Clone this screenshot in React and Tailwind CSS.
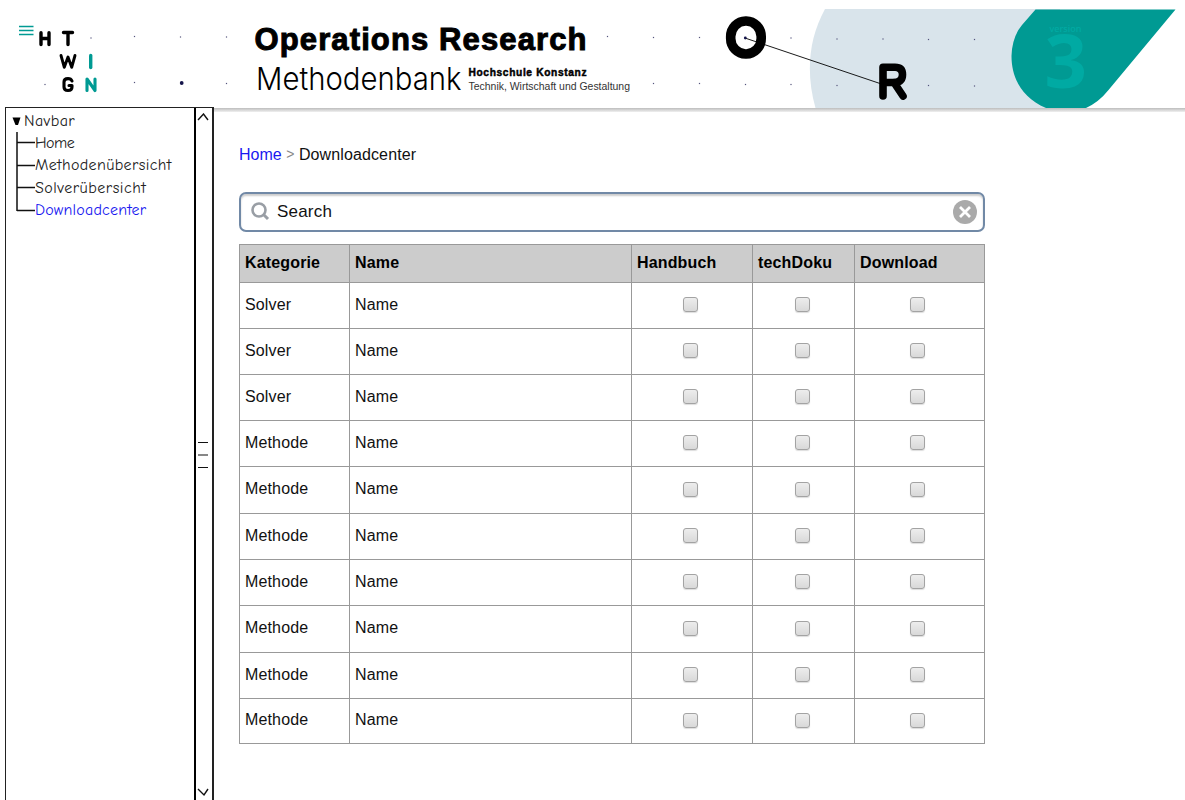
import React from "react";

const rows = [
  ["Solver", "h-[46px]"],
  ["Solver", "h-[46px]"],
  ["Solver", "h-[46px]"],
  ["Methode", "h-[46px]"],
  ["Methode", "h-[47px]"],
  ["Methode", "h-[46px]"],
  ["Methode", "h-[46px]"],
  ["Methode", "h-[47px]"],
  ["Methode", "h-[46px]"],
  ["Methode", "h-[45px]"],
];

const dots = [
  [91, 38], [134.5, 36.5], [180.5, 37], [226.5, 37], [607.5, 36.5], [653.5, 37.5], [699.5, 37.5],
  [791, 38], [837, 39], [883, 39], [928.5, 39.5], [974.5, 39.5],
  [45, 84.5], [134.5, 82.5], [226.5, 83.5], [653.5, 83.5], [699.5, 83.5], [745.5, 84.5],
  [791, 84.5], [837, 85.5], [928.5, 85.5], [974.5, 86],
];

function Banner() {
  return (
    <svg className="block h-[108px] w-[1185px] shrink-0 overflow-visible" viewBox="0 0 1185 108">
      <path d="M825 9H1060V108H815.5C806 74 808 40 825 9Z" fill="#d9e4eb" />
      <path
        d="M1035.500 9.500H1175.500L1108.500 90Q1099 102 1086 108H1046C1022 98 1011.500 78 1011.500 56Q1012 37 1022 25Z"
        fill="#009a93"
      />
      {dots.map(([x, y]) => (
        <rect key={`${x}-${y}`} x={x - 0.6} y={y - 0.6} width="1.200" height="1.200" fill="#55557c" />
      ))}
      <circle cx="181.700" cy="83" r="1.900" fill="#15154b" />
      <g stroke="#009a93" strokeWidth="1.300">
        <path d="M19 26.500H33.500M19 30.500H33.500M19 34.500H33.500" />
      </g>
      <g fill="none" strokeWidth="3.400" strokeLinecap="round" strokeLinejoin="round" stroke="#000">
        <g aria-label="HTWG" role="img">
          <path d="M41 32.700V44.500M49 32.700V44.500M41 38.500H49" />
          <path d="M63.500 32.500H72.500M68 32.500V44.500" />
          <path d="M61 55.500L64.300 67.300L68 57L71.700 67.300L75 55.500" strokeWidth="2.900" />
          <path d="M72 81Q71 78.600 68 78.600Q64 78.600 64 82V87Q64 90.500 68 90.500Q72 90.500 72 87V85.500H69" strokeWidth="3.100" />
        </g>
        <g stroke="#009a93">
          <path d="M90.700 55.500V67.500" />
          <path d="M87 90.500V79L95 90.500V79" strokeWidth="3.100" />
        </g>
      </g>
      <g fontFamily="'Liberation Sans', Arial, sans-serif">
        <text x="254.500" y="50" fontSize="31" fontWeight="700" stroke="#000" strokeWidth="1" textLength="332" lengthAdjust="spacing">Operations Research</text>
        <text x="468.500" y="76" fontSize="10.200" fontWeight="700" stroke="#000" strokeWidth="0.450" textLength="118" lengthAdjust="spacing">Hochschule Konstanz</text>
        <text x="468.500" y="90" fontSize="10.400" fill="#333" textLength="161.500" lengthAdjust="spacingAndGlyphs">Technik, Wirtschaft und Gestaltung</text>
      </g>
      <text x="256" y="90" fontSize="31.500" fontWeight="300" fontFamily="Inter, 'Liberation Sans', sans-serif" textLength="205.500" lengthAdjust="spacingAndGlyphs">Methodenbank</text>
      <g fill="none" stroke="#000" strokeLinecap="round" strokeLinejoin="round">
        <rect x="730.700" y="21" width="30.500" height="33" rx="15" ry="15.500" strokeWidth="9.600" />
        <path d="M883 96V67.200H895Q902.500 67.200 902.500 74.500T895 82.500H883M894 82.500L903 96" strokeWidth="7.600" />
        <path d="M745.500 38.200L880 83.500" strokeWidth="0.900" />
      </g>
      <circle cx="745.300" cy="38" r="1.400" fill="#15154b" />
      <g fill="#00aaa3" fontFamily="'Noto Sans', sans-serif">
        <text x="1049.500" y="31.500" fontSize="9.500" fontWeight="500" textLength="32" lengthAdjust="spacingAndGlyphs">version</text>
        <text x="1044.500" y="88" fontSize="74" fontWeight="700" textLength="42.500" lengthAdjust="spacingAndGlyphs">3</text>
      </g>
    </svg>
  );
}

function Sidebar() {
  return (
    <aside className="z-10 -mt-px ml-[5px] flex h-[700px] w-[209px] shrink-0 border-l-[1.500px] border-r-2 border-t-[1.500px] border-[#222] bg-white">
      <nav className="w-[189px] pt-[2px] text-[16px] text-[#222] [font-family:'Comic_Neue','Comic_Sans_MS','Open_Sans',sans-serif]">
        <div className="flex h-[22px] items-center pl-[6px]">
          <svg className="mr-[3px] h-[9px] w-[9px]" viewBox="0 0 9 9"><path d="M.5.500H8.500L6 8H3.500Z" /></svg>
          <span className="tracking-[0.400px]">Navbar</span>
        </div>
        <div className="flex">
          <svg className="h-[92px] w-[29px] shrink-0" viewBox="0 0 29 92" fill="none" stroke="#111" strokeWidth="1.500">
            <path d="M11 0V79M11 10.500H29M11 33.500H29M11 55.500H29M11 78.500H29" />
          </svg>
          <ul>
            <li className="h-[22px] leading-[22px] tracking-[-0.500px]">Home</li>
            <li className="h-[23px] leading-[23px] tracking-[0.350px]">Methodenübersicht</li>
            <li className="h-[22px] leading-[22px] tracking-[0.500px]">Solverübersicht</li>
            <li className="h-[23px] leading-[23px] tracking-[0.200px] text-[#1919f0]">Downloadcenter</li>
          </ul>
        </div>
      </nav>
      <div className="flex w-[18px] shrink-0 flex-col items-start justify-between border-l-2 border-black pb-[10px] pl-[1px] pt-[5px]">
        <svg className="h-[9px] w-[12px]" viewBox="0 0 12 9" fill="none" stroke="#111" strokeWidth="1.400"><path d="M1 7L6.500 1L11 7" /></svg>
        <svg className="ml-px h-[28px] w-[10px]" viewBox="0 0 10 28" stroke="#111" strokeWidth="1.200"><path d="M0 1.500H10M0 14H10M0 26.500H10" /></svg>
        <svg className="h-[9px] w-[12px]" viewBox="0 0 12 9" fill="none" stroke="#111" strokeWidth="1.400"><path d="M1 1L7 7L11 1" /></svg>
      </div>
    </aside>
  );
}

function Box() {
  return <span className="mx-auto mt-[-2px] block h-[15px] w-[15px] rounded-[3px] border border-[#a3a3a3] bg-linear-to-b from-[#ededed] to-[#d9d9d9] shadow-[0_1px_1px_#ddd]" />;
}

export default function App() {
  return (
    <div className="flex h-[800px] w-[1185px] flex-col overflow-hidden bg-white text-[16px] text-[#111] [font-family:'Liberation_Sans',Arial,sans-serif]">
      <Banner />
      <div className="flex">
        <Sidebar />
        <main className="grow">
          <div className="h-[4px] bg-linear-to-b from-[#bdbdbd] to-[#f0f0f0]" />
          <div className="ml-[25px] w-[746px]">
            <div className="mt-[32px] flex h-[21px] items-center gap-[4.500px]">
              <a className="text-[#1919f0]">Home</a>
              <span className="text-[14px] text-[#888]">&gt;</span>
              <span className="tracking-[0.120px]">Downloadcenter</span>
            </div>
            <div className="mt-[27px] flex h-[40px] items-center rounded-[7px] border-2 border-[#7189a6] pl-[10px] pr-[6px] shadow-[inset_0_2px_2px_#ccc]">
              <svg className="h-[20px] w-[20px]" viewBox="0 0 20 20" fill="none" stroke="#999ea5" strokeWidth="2.600"><circle cx="8" cy="8" r="6.500" /><path d="M12.500 12.500L17 17" strokeWidth="3" /></svg>
              <span className="ml-[6px] grow text-[17px] tracking-[0.200px]">Search</span>
              <svg className="h-[24px] w-[24px]" viewBox="0 0 24 24"><circle cx="12" cy="12" r="12" fill="#aaa" /><path d="M7 7L17 17M17 7L7 17" stroke="#fff" strokeWidth="2.800" /></svg>
            </div>
            <table className="mt-[12px] w-[746px] table-fixed border-collapse [&_td]:border [&_td]:border-[#999] [&_th]:border [&_th]:border-[#999]">
              <colgroup>
                <col className="w-[110px]" />
                <col className="w-[282px]" />
                <col className="w-[121px]" />
                <col className="w-[102px]" />
                <col className="w-[130px]" />
              </colgroup>
              <thead>
                <tr className="h-[38px] bg-[#ccc] text-left text-black">
                  {["Kategorie", "Name", "Handbuch", "techDoku", "Download"].map((h) => (
                    <th key={h} className="p-0 pb-[2px] pl-[5px] tracking-[0.150px]">{h}</th>
                  ))}
                </tr>
              </thead>
              <tbody>
                {rows.map(([kind, height], i) => (
                  <tr key={i} className={height}>
                    <td className="p-0 pb-[2px] pl-[5px] tracking-[0.150px]">{kind}</td>
                    <td className="p-0 pb-[2px] pl-[5px] tracking-[0.150px]">Name</td>
                    <td className="p-0 pr-[3px]"><Box /></td>
                    <td className="p-0 pr-[2px]"><Box /></td>
                    <td className="p-0 pr-[4px]"><Box /></td>
                  </tr>
                ))}
              </tbody>
            </table>
          </div>
        </main>
      </div>
    </div>
  );
}
